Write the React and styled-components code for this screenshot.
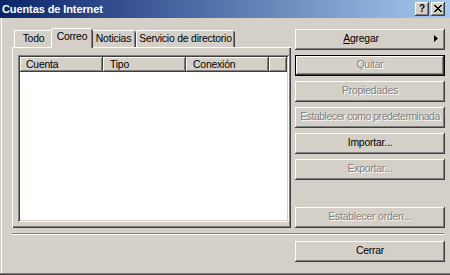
import React from "react";
import styled, { createGlobalStyle, css } from "styled-components";

const Global = createGlobalStyle`
  html, body { margin: 0; padding: 0; background: #d4d0c8; }
  body { font-family: "Liberation Sans", Arial, sans-serif; font-size: 11px; }
`;

const Window = styled.div`
  width: 450px;
  height: 275px;
  display: flex;
  flex-direction: column;
  background: #d4d0c8;
  overflow: hidden;
  font-family: "Liberation Sans", Arial, sans-serif;
  font-size: 10.4px;
  color: #000;
`;

const TitleBar = styled.div`
  height: 18px;
  flex: none;
  display: flex;
  align-items: flex-start;
  justify-content: space-between;
  background: linear-gradient(to right, #0a246a, #a6caf0);
  padding-left: 2px;
  padding-right: 5px;
`;

const Title = styled.div`
  color: #fff;
  font-weight: bold;
  font-size: 11px;
  line-height: 18px;
  letter-spacing: -0.1px;
`;

const CaptionButtons = styled.div`
  display: flex;
  gap: 2px;
  padding-top: 2px;
`;

const CaptionButton = styled.div`
  width: 14px;
  height: 14px;
  box-sizing: border-box;
  background: #d4d0c8;
  box-shadow: inset -1px -1px #404040, inset 1px 1px #fff, inset -2px -2px #808080;
  display: flex;
  align-items: center;
  justify-content: center;
  font-weight: bold;
  font-size: 10px;
  line-height: 1;
  padding-bottom: 1px;
`;

const Body = styled.div`
  flex: 1;
  display: flex;
  flex-direction: column;
  padding: 10px 5px 0 12px;
  box-shadow: inset 0 -1px #404040, inset 0 -2px #808080, inset 1px 0 #d4d0c8, inset 2px 0 #fff;
`;

const Main = styled.div`
  display: flex;
  gap: 4px;
  height: 200px;
`;

const TabArea = styled.div`
  width: 279px;
  display: flex;
  flex-direction: column;
`;

const TabStrip = styled.div`
  height: 19px;
  display: flex;
  align-items: flex-end;
  padding-left: 2px;
`;

const Tab = styled.div`
  box-sizing: border-box;
  width: ${(p) => p.$w}px;
  height: 17px;
  padding-top: 2px;
  line-height: 13px;
  text-align: center;
  white-space: nowrap;
  background: #d4d0c8;
  border-radius: 2px 2px 0 0;
  letter-spacing: -0.2px;
  box-shadow: inset 1px 0 #fff, inset 0 1px #fff, inset -1px 0 #404040, inset -2px 0 #808080;
  ${(p) =>
    p.$active &&
    css`
      width: ${p.$w + 4}px;
      height: 20px;
      margin: 0 -2px -1px -2px;
      position: relative;
      z-index: 1;
      padding-top: 2px;
    `}
`;

const TabPanel = styled.div`
  box-sizing: border-box;
  height: 181px;
  padding: 8px 2px 6px 6px;
  box-shadow: inset 1px 1px #fff, inset -1px -1px #404040, inset -2px -2px #808080;
`;

const ListView = styled.div`
  box-sizing: border-box;
  width: 271px;
  height: 167px;
  padding: 2px;
  background: #fff;
  box-shadow: inset 1px 1px #808080, inset -1px -1px #fff, inset 2px 2px #404040, inset -2px -2px #d4d0c8;
`;

const Header = styled.div`
  display: flex;
  height: 15px;
`;

const HeaderCell = styled.div`
  box-sizing: border-box;
  width: ${(p) => (p.$w ? `${p.$w}px` : "auto")};
  flex: ${(p) => (p.$w ? "none" : "1")};
  height: 15px;
  line-height: 15px;
  padding-left: ${(p) => p.$pl || 6}px;
  background: #d4d0c8;
  letter-spacing: -0.2px;
  white-space: nowrap;
  box-shadow: inset -1px -1px #404040, inset 1px 1px #fff, inset -2px -2px #808080;
`;

const ButtonColumn = styled.div`
  width: 150px;
  display: flex;
  flex-direction: column;
  gap: 5px;
  padding-top: 1px;
`;

const Button = styled.div`
  position: relative;
  box-sizing: border-box;
  width: 150px;
  height: 21px;
  flex: none;
  line-height: 20px;
  text-align: center;
  white-space: nowrap;
  overflow: hidden;
  letter-spacing: ${(p) => (p.$tight ? "-0.45px" : "-0.2px")};
  background: #d4d0c8;
  color: #000;
  padding-right: ${(p) => (p.$menu ? 18 : 0)}px;
  box-shadow: inset -1px -1px #404040, inset 1px 1px #fff, inset -2px -2px #808080;
  ${(p) =>
    p.$default &&
    css`
      box-shadow: inset 0 0 0 1px #000, inset -2px -2px #404040, inset 2px 2px #fff,
        inset -3px -3px #808080;
    `}
  ${(p) =>
    p.$disabled &&
    css`
      color: #808080;
      text-shadow: 1px 1px 0 #fff;
    `}
  ${(p) =>
    p.$bottom &&
    css`
      margin-top: auto;
    `}
`;

const MenuArrow = styled.svg`
  position: absolute;
  right: 7px;
  top: 6px;
`;

const Separator = styled.div`
  height: 2px;
  margin-top: 5px;
  margin-right: 1px;
  box-shadow: inset 0 1px #808080, inset 0 -1px #fff;
`;

const Footer = styled.div`
  display: flex;
  justify-content: flex-end;
  margin-top: 6px;
`;

const CloseGlyph = () => {
  const rows = [
    [0, 1, 6, 7],
    [1, 2, 5, 6],
    [2, 3, 4, 5],
    [3, 4],
    [2, 3, 4, 5],
    [1, 2, 5, 6],
    [0, 1, 6, 7],
  ];
  return (
    <svg width="8" height="7" viewBox="0 0 8 7" shapeRendering="crispEdges">
      {rows.map((cols, y) =>
        cols.map((x) => <rect key={`${x}-${y}`} x={x} y={y} width="1" height="1" fill="#000" />)
      )}
    </svg>
  );
};

export default function App() {
  return (
    <>
      <Global />
      <Window>
        <TitleBar>
          <Title>Cuentas de Internet</Title>
          <CaptionButtons>
            <CaptionButton>?</CaptionButton>
            <CaptionButton>
              <CloseGlyph />
            </CaptionButton>
          </CaptionButtons>
        </TitleBar>
        <Body>
          <Main>
            <TabArea>
              <TabStrip>
                <Tab $w={39}>Todo</Tab>
                <Tab $w={38} $active>
                  Correo
                </Tab>
                <Tab $w={45}>Noticias</Tab>
                <Tab $w={99}>Servicio de directorio</Tab>
              </TabStrip>
              <TabPanel>
                <ListView>
                  <Header>
                    <HeaderCell $w={83}>Cuenta</HeaderCell>
                    <HeaderCell $w={83} $pl={7}>
                      Tipo
                    </HeaderCell>
                    <HeaderCell $w={83} $pl={7}>
                      Conexión
                    </HeaderCell>
                    <HeaderCell />
                  </Header>
                </ListView>
              </TabPanel>
            </TabArea>
            <ButtonColumn>
              <Button $menu>
                <u>A</u>gregar
                <MenuArrow width="4" height="7" viewBox="0 0 4 7">
                  <path d="M0 0 L4 3.5 L0 7 Z" fill="#000" />
                </MenuArrow>
              </Button>
              <Button $default $disabled>
                Quitar
              </Button>
              <Button $disabled>Propiedades</Button>
              <Button $disabled $tight>
                Establecer como predeterminada
              </Button>
              <Button>Importar...</Button>
              <Button $disabled>Exportar...</Button>
              <Button $disabled $bottom>
                Establecer orden...
              </Button>
            </ButtonColumn>
          </Main>
          <Separator />
          <Footer>
            <Button>Cerrar</Button>
          </Footer>
        </Body>
      </Window>
    </>
  );
}
